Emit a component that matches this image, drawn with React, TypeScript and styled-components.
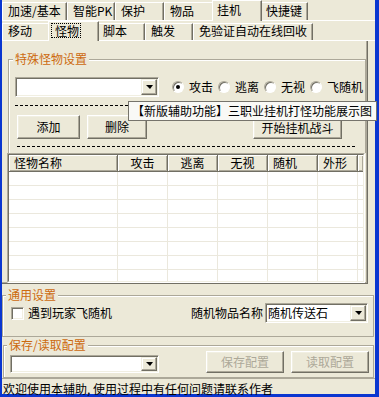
import React from "react"
import styled, { createGlobalStyle } from "styled-components"

const GlobalStyle = createGlobalStyle`
  html, body {
    margin: 0;
    padding: 0;
    background: #ece9d8;
    overflow: hidden;
  }
  body {
    font-family: "Noto Sans CJK SC", "Liberation Sans", sans-serif;
    font-size: 12px;
  }
`

const Window = styled.div`
  position: relative;
  box-sizing: border-box;
  width: 379px;
  height: 397px;
  background: #ece9d8;
  border-left: 2px solid #0a36d0;
  border-right: 4px solid #0a36d0;
  border-bottom: 3px solid #0a36d0;
  display: flex;
  flex-direction: column;
  color: #000;
  font-size: 12px;
  line-height: 12px;
`

const TabStrip = styled.div<{ $h: number }>`
  display: flex;
  align-items: flex-start;
  height: ${(p) => p.$h}px;
  border-bottom: 1px solid #fff;
`

const Tab = styled.div<{ $w: number; $h: number; $active?: boolean; $pt: number }>`
  box-sizing: border-box;
  position: relative;
  z-index: ${(p) => (p.$active ? 2 : 1)};
  flex: none;
  width: ${(p) => (p.$active ? p.$w + 4 : p.$w)}px;
  height: ${(p) => (p.$active ? p.$h + 1 : p.$h - 2)}px;
  margin: ${(p) => (p.$active ? "0 -2px" : "2px 0 0")};
  padding: ${(p) => (p.$active ? "1px 0 0 2px" : `${p.$pt}px 0 0 5px`)};
  background: #ece9d8;
  border-top: 1px solid #fff;
  border-left: 1px solid #fff;
  border-right: 1px solid #716f64;
  box-shadow: inset -1px 0 #aca899;
  white-space: nowrap;
`

const TabLabel = styled.span<{ $focus?: boolean }>`
  display: inline-block;
  box-sizing: border-box;
  height: ${(p) => (p.$focus ? "15px" : "auto")};
  padding: ${(p) => (p.$focus ? "1px 1px 0 3px" : "2px 0 0 2px")};
  border: ${(p) => (p.$focus ? "1px dotted #000" : "none")};
`

const Panel = styled.div`
  box-sizing: border-box;
  width: 366px;
  display: flex;
  flex-direction: column;
  border-right: 1px solid #716f64;
  border-bottom: 1px solid #716f64;
  box-shadow: inset -1px -1px #aca899;
`

const GroupBox = styled.div<{ $w: number; $mt: number; $ml: number; $pl: number; $pb: number; $open?: boolean }>`
  box-sizing: border-box;
  display: flex;
  flex-direction: column;
  width: ${(p) => p.$w}px;
  margin: ${(p) => p.$mt}px 0 0 ${(p) => p.$ml}px;
  padding: 0 0 ${(p) => p.$pb}px ${(p) => p.$pl}px;
  border: 1px solid #aca899;
  border-bottom: ${(p) => (p.$open ? "none" : "1px solid #aca899")};
  box-shadow: inset 1px 1px #fff;
`

const GroupTitle = styled.div<{ $ml: number }>`
  position: relative;
  width: fit-content;
  height: 12px;
  margin: -7px 0 0 ${(p) => p.$ml}px;
  padding: 0 2px;
  background: #ece9d8;
  color: #cd6a0f;
  white-space: nowrap;
`

const Row = styled.div<{ $mt: number; $h: number; $align?: string; $pr?: number }>`
  display: flex;
  align-items: ${(p) => p.$align ?? "center"};
  height: ${(p) => p.$h}px;
  margin-top: ${(p) => p.$mt}px;
  padding-right: ${(p) => p.$pr ?? 0}px;
`

const Combo = styled.div<{ $w: number; $h: number; $ml?: number }>`
  box-sizing: border-box;
  display: flex;
  flex: none;
  width: ${(p) => p.$w}px;
  height: ${(p) => p.$h}px;
  margin-left: ${(p) => p.$ml ?? 0}px;
  padding: 1px;
  background: #fff;
  border: 1px solid;
  border-color: #aca899 #fff #fff #aca899;
  box-shadow: inset 1px 1px #716f64, inset -1px -1px #f1efe2;
`

const ComboText = styled.div`
  flex: 1;
  display: flex;
  align-items: center;
  padding-left: 1px;
  white-space: nowrap;
`

const DropButton = styled.div`
  box-sizing: border-box;
  flex: none;
  width: 16px;
  display: flex;
  align-items: center;
  justify-content: center;
  background: #ece9d8;
  border: 1px solid;
  border-color: #f1efe2 #716f64 #716f64 #f1efe2;
  box-shadow: inset -1px -1px #aca899, inset 1px 1px #fff;

  &::after {
    content: "";
    border-left: 4px solid transparent;
    border-right: 3px solid transparent;
    border-top: 4px solid #000;
  }
`

const Radios = styled.div`
  display: flex;
  align-items: center;
  gap: 5px;
  margin-left: 13px;
`

const RadioItem = styled.label`
  display: flex;
  align-items: center;
  gap: 5px;
  white-space: nowrap;
`

const RadioCircle = styled.span<{ $on?: boolean }>`
  box-sizing: border-box;
  display: flex;
  align-items: center;
  justify-content: center;
  width: 12px;
  height: 12px;
  border-radius: 50%;
  background: #fff;
  border: 1px solid;
  border-color: #aca899 #fff #fff #aca899;
  box-shadow: inset 1px 1px #716f64;

  &::after {
    content: "";
    width: 4px;
    height: 4px;
    border-radius: 50%;
    background: ${(p) => (p.$on ? "#000" : "transparent")};
  }
`

const CheckBox = styled.span`
  box-sizing: border-box;
  flex: none;
  width: 13px;
  height: 13px;
  background: #fff;
  border: 1px solid;
  border-color: #aca899 #fff #fff #aca899;
  box-shadow: inset 1px 1px #716f64, inset -1px -1px #f1efe2;
`

const CheckItem = styled.label`
  display: flex;
  align-items: center;
  gap: 4px;
  white-space: nowrap;
`

const Dashed = styled.div<{ $mt: number; $ml?: number; $w: number }>`
  height: 1px;
  width: ${(p) => p.$w}px;
  margin: ${(p) => p.$mt}px 0 0 ${(p) => p.$ml ?? 0}px;
  background: repeating-linear-gradient(to right, #000 0 3px, transparent 3px 5px);
`

const Button = styled.button<{ $w: number; $h: number; $ml?: number }>`
  box-sizing: border-box;
  flex: none;
  display: flex;
  align-items: center;
  justify-content: center;
  width: ${(p) => p.$w}px;
  height: ${(p) => p.$h}px;
  margin: 0 0 0 ${(p) => p.$ml ?? 0}px;
  padding: 0;
  font: inherit;
  line-height: 12px;
  color: ${(p) => (p.disabled ? "#aca899" : "#000")};
  background: #ece9d8;
  border: 1px solid;
  border-color: #fff #716f64 #716f64 #fff;
  box-shadow: inset -1px -1px #aca899, inset 1px 1px #f1efe2;
  white-space: nowrap;
`

const ListFrame = styled.div`
  box-sizing: border-box;
  width: 358px;
  height: 130px;
  margin-left: 5px;
  border: 1px solid;
  border-color: #aca899 #fff #fff #aca899;
`

const ListInner = styled.div`
  box-sizing: border-box;
  height: 100%;
  display: flex;
  flex-direction: column;
  background: #fff;
  border: 1px solid;
  border-color: #716f64 #f1efe2 #f1efe2 #716f64;
`

const HeaderRow = styled.div`
  display: flex;
  flex: none;
  height: 17px;
  box-sizing: border-box;
  border-bottom: 1px solid #716f64;
  background: #ece9d8;
`

const HeaderCell = styled.div<{ $w?: number; $align: string }>`
  box-sizing: border-box;
  flex: ${(p) => (p.$w ? "none" : "1")};
  width: ${(p) => (p.$w ? `${p.$w}px` : "auto")};
  padding: 2px 0 0 ${(p) => (p.$align === "left" ? 5 : 0)}px;
  text-align: ${(p) => p.$align};
  border-right: ${(p) => (p.$w ? "1px solid #716f64" : "none")};
  box-shadow: inset 1px 1px #fff, inset -1px -1px #aca899;
  white-space: nowrap;
`

const ListBody = styled.div`
  flex: 1;
  display: flex;
  background: repeating-linear-gradient(to bottom, #fff 0 13px, #ebe8dd 13px 14px);
`

const BodyCol = styled.div<{ $w?: number }>`
  box-sizing: border-box;
  flex: ${(p) => (p.$w ? "none" : "1")};
  width: ${(p) => (p.$w ? `${p.$w}px` : "auto")};
  border-right: ${(p) => (p.$w ? "1px solid #ebe8dd" : "none")};
`

const RightPart = styled.div`
  display: flex;
  align-items: center;
  gap: 2px;
  margin-left: auto;
  white-space: nowrap;
`

const StatusBar = styled.div`
  flex: 1;
  padding: 4px 0 0 1px;
  border-top: 1px solid #aca899;
  white-space: nowrap;
`

const Tooltip = styled.div`
  position: absolute;
  left: 126px;
  top: 101px;
  box-sizing: border-box;
  width: 249px;
  height: 20px;
  padding: 3px 0 0 3px;
  background: #f9f9f6;
  border: 1px solid #76746c;
  white-space: nowrap;
  z-index: 5;
`

const topTabs = [
  { t: "加速/基本", w: 65 },
  { t: "智能PK", w: 48 },
  { t: "保护", w: 49 },
  { t: "物品", w: 50 },
  { t: "挂机", w: 46, active: true },
  { t: "快捷键", w: 48 },
]

const subTabs = [
  { t: "移动", w: 48 },
  { t: "怪物", w: 47, active: true },
  { t: "脚本", w: 48 },
  { t: "触发", w: 48 },
  { t: "免验证自动在线回收", w: 120 },
]

const columns = [
  { t: "怪物名称", w: 109, a: "left" },
  { t: "攻击", w: 50, a: "center" },
  { t: "逃离", w: 50, a: "center" },
  { t: "无视", w: 50, a: "center" },
  { t: "随机", w: 50, a: "left" },
  { t: "外形", w: 40, a: "left" },
]

const radios = [
  { t: "攻击", on: true },
  { t: "逃离" },
  { t: "无视" },
  { t: "飞随机" },
]

const App = function () {
  return (
    <Window>
      <GlobalStyle />
      <TabStrip $h={20}>
        {topTabs.map((tab) => (
          <Tab key={tab.t} $w={tab.w} $h={20} $pt={2} $active={tab.active}>
            {tab.active ? <TabLabel>{tab.t}</TabLabel> : tab.t}
          </Tab>
        ))}
      </TabStrip>
      <TabStrip $h={19}>
        {subTabs.map((tab) => (
          <Tab key={tab.t} $w={tab.w} $h={19} $pt={1} $active={tab.active}>
            {tab.active ? <TabLabel $focus>{tab.t}</TabLabel> : tab.t}
          </Tab>
        ))}
      </TabStrip>
      <Panel>
        <GroupBox $w={358} $mt={18} $ml={6} $pl={6} $pb={6} $open>
          <GroupTitle $ml={-2}>特殊怪物设置</GroupTitle>
          <Row $mt={12} $h={20}>
            <Combo $w={144} $h={20}>
              <ComboText />
              <DropButton />
            </Combo>
            <Radios>
              {radios.map((r) => (
                <RadioItem key={r.t}>
                  <RadioCircle $on={r.on} />
                  {r.t}
                </RadioItem>
              ))}
            </Radios>
          </Row>
          <Dashed $mt={8} $w={340} />
          <Row $mt={9} $h={24} $align="flex-end">
            <Button $w={63} $h={24} $ml={2}>
              添加
            </Button>
            <Button $w={60} $h={24} $ml={7}>
              删除
            </Button>
            <Button $w={89} $h={23} $ml={106}>
              开始挂机战斗
            </Button>
          </Row>
          <Dashed $mt={7} $ml={2} $w={338} />
        </GroupBox>
        <ListFrame>
          <ListInner>
            <HeaderRow>
              {columns.map((c) => (
                <HeaderCell key={c.t} $w={c.w} $align={c.a}>
                  {c.t}
                </HeaderCell>
              ))}
              <HeaderCell $align="left" />
            </HeaderRow>
            <ListBody>
              {columns.map((c) => (
                <BodyCol key={c.t} $w={c.w} />
              ))}
              <BodyCol />
            </ListBody>
          </ListInner>
        </ListFrame>
      </Panel>
      <GroupBox $w={372} $mt={11} $ml={0} $pl={8} $pb={13}>
        <GroupTitle $ml={-5}>通用设置</GroupTitle>
        <Row $mt={2} $h={20} $pr={5}>
          <CheckItem>
            <CheckBox />
            遇到玩家飞随机
          </CheckItem>
          <RightPart>
            随机物品名称
            <Combo $w={103} $h={20}>
              <ComboText>随机传送石</ComboText>
              <DropButton />
            </Combo>
          </RightPart>
        </Row>
      </GroupBox>
      <GroupBox $w={371} $mt={8} $ml={1} $pl={6} $pb={4}>
        <GroupTitle $ml={-3}>保存/读取配置</GroupTitle>
        <Row $mt={0} $h={22} $align="flex-end">
          <Combo $w={149} $h={18}>
            <ComboText />
            <DropButton />
          </Combo>
          <Button $w={78} $h={22} $ml={47} disabled>
            保存配置
          </Button>
          <Button $w={78} $h={22} $ml={7} disabled>
            读取配置
          </Button>
        </Row>
      </GroupBox>
      <StatusBar>欢迎使用本辅助, 使用过程中有任何问题请联系作者</StatusBar>
      <Tooltip>【新版辅助功能】三职业挂机打怪功能展示图</Tooltip>
    </Window>
  )
}

export default App
